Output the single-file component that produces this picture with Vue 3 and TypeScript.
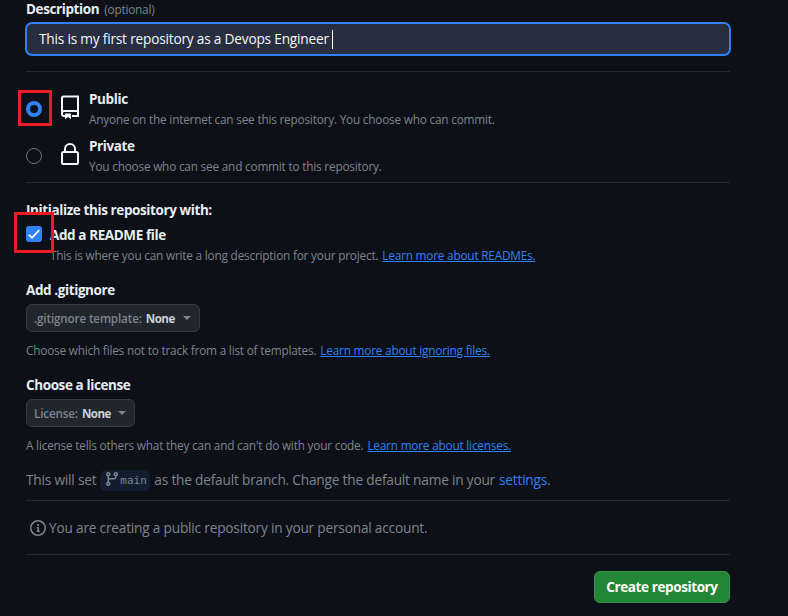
<script setup lang="ts">
import { ref } from 'vue'

type Visibility = 'public' | 'private'

const description = ref('This is my first repository as a Devops Engineer')
const visibility = ref<Visibility>('public')
const readme = ref(true)
</script>

<template>
  <main class="form">
    <label class="label-row"><b class="title w-desc">Description</b><span class="optional">(optional)</span></label>
    <div class="field"><span class="value">{{ description }}</span><i class="caret"></i></div>

    <section class="visibility">
      <div class="option" @click="visibility = 'public'">
        <span class="radio" :class="{ on: visibility === 'public' }"><i class="mark mark-radio"></i></span>
        <svg class="kind" viewBox="0 0 24 24"><path class="line" d="M7 21H5.8A1.8 1.8 0 0 1 4 19.2V3.3A1.8 1.8 0 0 1 5.8 1.5H20V21H14M4 18.2A2.2 2.2 0 0 1 6.2 16H20" /><path d="M7 18.5h6V24.2l-3-2.2-3 2.2Z" /></svg>
        <div class="copy"><b class="title w-public">Public</b><p class="note w-anyone">Anyone on the internet can see this repository. You choose who can commit.</p></div>
      </div>
      <div class="option" @click="visibility = 'private'">
        <span class="radio" :class="{ on: visibility === 'private' }"></span>
        <svg class="kind" viewBox="0 0 24 24"><rect class="line" x="4" y="10" width="16" height="12" rx="1.6" /><path class="line" d="M7 10V7a5 5 0 0 1 10 0V10" /></svg>
        <div class="copy"><b class="title w-private">Private</b><p class="note w-choose">You choose who can see and commit to this repository.</p></div>
      </div>
    </section>

    <b class="title heading w-init">Initialize this repository with:</b>
    <div class="readme" @click="readme = !readme">
      <span class="check" :class="{ on: readme }"><svg v-if="readme" viewBox="0 0 16 16"><path d="M2.7 8.6 6 11.9 13.2 4.2" /></svg><i class="mark mark-check"></i></span>
      <div class="copy"><b class="title w-readme">Add a README file</b><p class="note"><span class="w-where">This is where you can write a long description for your project.</span><a class="w-l1">Learn more about READMEs.</a></p></div>
    </div>

    <section class="picker">
      <b class="title w-git">Add .gitignore</b>
      <button class="select s-git"><span class="w-tpl">.gitignore template:</span><b>None</b><i class="arrow"></i></button>
      <p class="note"><span class="w-which">Choose which files not to track from a list of templates.</span><a class="w-l2">Learn more about ignoring files.</a></p>
    </section>
    <section class="picker">
      <b class="title w-lic">Choose a license</b>
      <button class="select s-lic"><span class="w-licb">License:</span><b>None</b><i class="arrow"></i></button>
      <p class="note"><span class="w-tells">A license tells others what they can and can't do with your code.</span><a class="w-l3">Learn more about licenses.</a></p>
    </section>

    <p class="branch-row">
      <span class="w-set">This will set</span>
      <code class="branch"><svg viewBox="0 0 16 16"><path d="M9.5 3.25a2.25 2.25 0 1 1 3 2.122V6A2.5 2.5 0 0 1 10 8.5H6a1 1 0 0 0-1 1v1.128a2.251 2.251 0 1 1-1.5 0V5.372a2.25 2.25 0 1 1 1.5 0v1.836A2.493 2.493 0 0 1 6 7h4a1 1 0 0 0 1-1v-.628A2.25 2.25 0 0 1 9.5 3.25Zm-6 0a.75.75 0 1 0 1.5 0 .75.75 0 0 0-1.5 0Zm8.25-.75a.75.75 0 1 0 0 1.5.75.75 0 0 0 0-1.5ZM4.25 12a.75.75 0 1 0 0 1.5.75.75 0 0 0 0-1.5Z" /></svg>main</code>
      <span class="w-as">as the default branch. Change the default name in your</span>
      <span class="w-settings"><a>settings</a>.</span>
    </p>
    <p class="info-row">
      <svg viewBox="0 0 16 16"><path d="M0 8a8 8 0 1 1 16 0A8 8 0 0 1 0 8Zm8-6.5a6.5 6.5 0 1 0 0 13 6.5 6.5 0 0 0 0-13ZM6.5 7.75A.75.75 0 0 1 7.25 7h1a.75.75 0 0 1 .75.75v2.75h.25a.75.75 0 0 1 0 1.5h-2a.75.75 0 0 1 0-1.5h.25v-2h-.25a.75.75 0 0 1-.75-.75ZM8 6a1 1 0 1 1 0-2 1 1 0 0 1 0 2Z" /></svg>
      <span class="w-info">You are creating a public repository in your personal account.</span>
    </p>
    <footer><button class="create"><span class="w-create">Create repository</span></button></footer>
  </main>
</template>

<style>
body { background: #0d1017; }
</style>

<style scoped>
.form { box-sizing: border-box; width: 788px; height: 616px; padding: 0 58px 0 26px; overflow: hidden; background: #0d1017; color: #7d858f; font-family: "Open Sans", "Noto Sans", sans-serif; font-size: 13.7px; line-height: 20px; letter-spacing: -.21px; white-space: nowrap; }
p { margin: 0; }
b, button { font-weight: 700; }
.title { display: block; color: #e6edf3; font-size: 13.5px; line-height: 20px; letter-spacing: -.4px; }
.note { display: flex; gap: 4px; font-size: 11.8px; line-height: 18px; letter-spacing: -.2px; }
a { color: #2f81f7; cursor: pointer; }
.note a { text-decoration: underline; text-underline-offset: 1px; }
.label-row { display: flex; gap: 5px; height: 24px; margin-top: -1px; line-height: 20px; }
.optional { font-size: 11.8px; line-height: 20px; }
.field { box-sizing: border-box; display: flex; align-items: center; gap: 3px; height: 34px; margin: -1px -1px 0; padding: 0 12px; border: 2px solid #2f81f7; border-radius: 7px; background: #272e3f; color: #f5f8fc; }
.caret { width: 1px; height: 19px; background: #fff; }
.visibility { display: flex; flex-direction: column; gap: 9px; box-sizing: border-box; height: 112px; margin-top: 15px; padding-top: 17px; border-top: 1px solid #23272f; border-bottom: 1px solid #23272f; }
.option { display: flex; height: 38px; }
.option .note { margin-top: 1px; }
.radio { position: relative; box-sizing: border-box; width: 16px; height: 16px; margin: 12px 16px 0 0; border: 1px solid #6e7681; border-radius: 50%; }
.radio.on { border: 4px solid #2f81f7; }
.kind { width: 24px; height: 24px; margin: 6px 7px 0 0; overflow: visible; fill: #f0f6fc; }
.line { fill: none; stroke: #f0f6fc; stroke-width: 2; }
.mark { position: absolute; box-sizing: border-box; border: 3px solid #ed1c24; }
.mark-radio { left: -12px; top: -15px; width: 34px; height: 36px; }
.mark-check { left: -12px; top: -14px; width: 40px; height: 41px; }
.heading { margin-top: 17px; }
.readme { display: flex; gap: 8px; height: 38px; margin-top: 5px; }
.readme .note { margin-top: 1px; }
.check { position: relative; width: 16px; height: 16px; margin-top: 1px; border-radius: 3px; background: #161b22; }
.check.on { background: #2f81f7; }
.check svg { display: block; fill: none; stroke: #fff; stroke-width: 1.7; }
.picker { height: 79px; margin-top: 16px; }
.readme + .picker { margin-top: 17px; }
.select { display: flex; align-items: center; box-sizing: border-box; height: 28px; margin: 4px 0 9px; padding: 0 8px 0 7px; border: 1px solid #363b42; border-radius: 6px; background: #21262d; color: #7d858f; font-family: inherit; font-size: 11.6px; font-weight: 600; letter-spacing: -.12px; gap: 4px; }
.select b { color: #c9d1d9; letter-spacing: -.5px; }
.arrow { margin-left: auto; border: 4px solid transparent; border-top-color: #7d858f; border-bottom: 0; }
.s-git { width: 174px; }
.s-lic { width: 109px; }
.branch-row { display: flex; align-items: center; gap: 4px; height: 20px; margin-top: 16px; }
.branch { display: flex; align-items: center; box-sizing: border-box; width: 50px; height: 21px; padding-left: 4px; border-radius: 6px; background: #121d2f; font: 11px "DejaVu Sans Mono", monospace; letter-spacing: 0; }
.branch svg { width: 16px; height: 16px; fill: #7d858f; margin-top: -3px; }
.info-row { display: flex; align-items: center; gap: 3px; box-sizing: border-box; height: 55px; margin-top: 10px; padding-left: 4px; border-top: 1px solid #23272f; border-bottom: 1px solid #23272f; }
.info-row svg { width: 16px; height: 16px; fill: #7d858f; }
footer { display: flex; justify-content: flex-end; padding-top: 16px; }
.create { box-sizing: border-box; width: 136px; height: 32px; padding: 0; border: 1px solid #36924a; border-radius: 6px; background: #238636; color: #fff; font-family: inherit; font-size: 13.5px; letter-spacing: -.4px; }
</style>
